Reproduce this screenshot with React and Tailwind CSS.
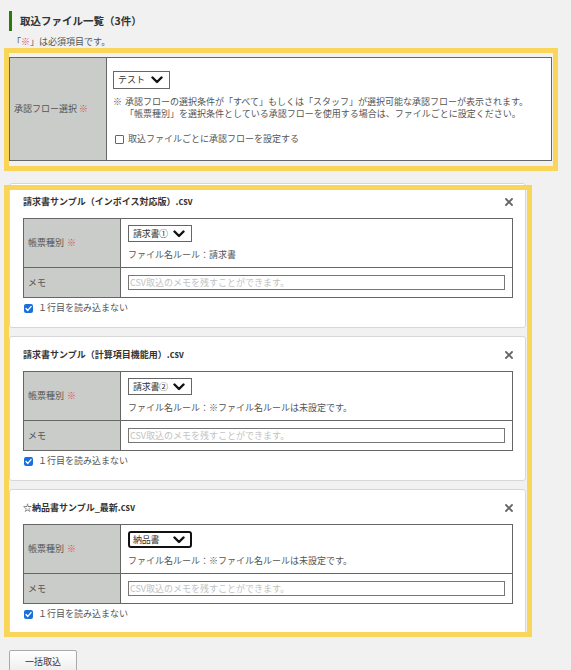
import React from "react";

const FONT = { fontFamily: '"Noto Sans CJK JP", "Noto Sans", sans-serif' };

function Chevron() {
  return (
    <svg width="12" height="8" viewBox="0 0 12 8" className="shrink-0">
      <polyline points="1.5,1.5 6,6 10.5,1.5" fill="none" stroke="#111" strokeWidth="2.4" strokeLinecap="round" strokeLinejoin="round" />
    </svg>
  );
}

function CloseIcon() {
  return (
    <svg width="8" height="8" viewBox="0 0 8 8" className="shrink-0">
      <line x1="1" y1="1" x2="7" y2="7" stroke="#666" strokeWidth="1.8" strokeLinecap="round" />
      <line x1="7" y1="1" x2="1" y2="7" stroke="#666" strokeWidth="1.8" strokeLinecap="round" />
    </svg>
  );
}

function CheckedBox() {
  return (
    <span className="flex h-[9px] w-[9px] shrink-0 items-center justify-center rounded-[2px] bg-[#1a6fdb]">
      <svg width="7" height="7" viewBox="0 0 7 7">
        <polyline points="1,3.6 2.8,5.4 6,1.6" fill="none" stroke="#fff" strokeWidth="1.4" strokeLinecap="round" strokeLinejoin="round" />
      </svg>
    </span>
  );
}

const cards = [
  {
    title: "請求書サンプル（インボイス対応版）.csv",
    value: "請求書①",
    rule: "ファイル名ルール：請求書",
    focused: false,
  },
  {
    title: "請求書サンプル（計算項目機能用）.csv",
    value: "請求書②",
    rule: "ファイル名ルール：※ファイル名ルールは未設定です。",
    focused: false,
  },
  {
    title: "☆納品書サンプル_最新.csv",
    value: "納品書",
    rule: "ファイル名ルール：※ファイル名ルールは未設定です。",
    focused: true,
  },
];

function Card({ card }) {
  return (
    <div className="rounded-[3px] border border-[#d6d7d6] bg-white pb-[13px] pl-[13px] pr-[12px] pt-[11px]">
      <div className="mb-[9px] flex h-[14px] items-center justify-between">
        <span className="text-[9px] font-bold leading-[14px] text-[#333]">{card.title}</span>
        <CloseIcon />
      </div>
      <div className="border border-[#666]">
        <div className="flex h-[49px] border-b border-[#666]">
          <div className="flex w-[97px] shrink-0 items-center border-r border-[#666] bg-[#c9ccc8] pl-[4px] text-[9px] text-[#555]">
            帳票種別<span className="ml-[3px] text-[#e5485a]">※</span>
          </div>
          <div className="flex flex-col items-start pl-[7px] pt-[6px]">
            <div
              className={
                card.focused
                  ? "flex h-[17px] w-[64px] items-center justify-between rounded-[3px] border-2 border-[#111] pl-[3px] pr-[5px] text-[9px] text-[#333]"
                  : "flex h-[17px] w-[64px] items-center justify-between border border-[#666] pl-[4px] pr-[6px] text-[9px] text-[#333]"
              }
            >
              <span className="tracking-[-0.3px]">{card.value}</span>
              <Chevron />
            </div>
            <div className="mt-[7px] text-[9px] leading-[12px] text-[#555]">{card.rule}</div>
          </div>
        </div>
        <div className="flex h-[29px]">
          <div className="flex w-[97px] shrink-0 items-center border-r border-[#666] bg-[#c9ccc8] pl-[4px] text-[9px] text-[#555]">
            メモ
          </div>
          <div className="flex flex-1 items-center pl-[7px] pr-[7px]">
            <input
              className="h-[15px] w-full border border-[#777] bg-white px-[1px] text-[9px] text-[#333] outline-none placeholder:text-[#c2c2c2]"
              style={FONT}
              placeholder="CSV取込のメモを残すことができます。"
            />
          </div>
        </div>
      </div>
      <div className="mt-[4px] flex h-[12px] items-center gap-[5px] pl-[1px] text-[9px] text-[#555]">
        <CheckedBox />
        <span>１行目を読み込まない</span>
      </div>
    </div>
  );
}

export default function App() {
  return (
    <div className="min-h-[670px] w-[571px] bg-[#f0f1f0] pl-[9px] pt-[11px]" style={FONT}>
      <div className="flex h-[20px] items-center">
        <div className="h-[20px] w-[3px] bg-[#2a7a0c]" />
        <h1 className="ml-[8px] text-[10.5px] font-bold text-[#333]">取込ファイル一覧（3件）</h1>
      </div>
      <p className="ml-[3px] mt-[5px] h-[12px] text-[9px] leading-[12px] text-[#555]">
        「<span className="text-[#e5485a]">※</span>」は必須項目です。
      </p>

      <div className="-ml-[5px] w-[554px] border-[5px] border-[#f9d65a] pb-[5px] pt-[4px]">
        <div className="flex h-[104px] w-[543px] border border-[#666] bg-white">
          <div className="flex w-[97px] shrink-0 items-center border-r border-[#666] bg-[#c9ccc8] pl-[4px] text-[9px] text-[#555]">
            承認フロー選択<span className="ml-[2px] text-[#e5485a]">※</span>
          </div>
          <div className="flex flex-col items-start pl-[6px] pt-[13px]">
            <div className="flex h-[18px] items-center gap-[6px] border border-[#666] pl-[4px] pr-[6px] text-[9px] text-[#333]">
              <span>テスト</span>
              <Chevron />
            </div>
            <div className="mt-[7px] flex text-[9px] leading-[12px] text-[#555]">
              <span className="w-[12px] shrink-0">※</span>
              <div>
                <div>承認フローの選択条件が「すべて」もしくは「スタッフ」が選択可能な承認フローが表示されます。</div>
                <div>「帳票種別」を選択条件としている承認フローを使用する場合は、ファイルごとに設定ください。</div>
              </div>
            </div>
            <div className="ml-[2px] mt-[13px] flex h-[12px] items-center gap-[4px] text-[9px] text-[#555]">
              <span className="h-[9px] w-[9px] shrink-0 rounded-[1px] border border-[#666] bg-white" />
              <span>取込ファイルごとに承認フローを設定する</span>
            </div>
          </div>
        </div>
      </div>

      <div className="relative mt-[12px] flex w-[517px] flex-col gap-[8px]">
        {cards.map((c, i) => (
          <Card key={i} card={c} />
        ))}
        <div className="pointer-events-none absolute -bottom-[3px] -left-[5px] -right-[6px] top-[2px] border-[5px] border-[#f9d65a]" />
      </div>

      <button
        className="mt-[16px] flex h-[24px] w-[68px] items-center justify-center rounded-[2px] border border-[#aaa] bg-gradient-to-b from-white to-[#ececec] text-[9px] text-[#333]"
        style={FONT}
      >
        一括取込
      </button>
    </div>
  );
}
